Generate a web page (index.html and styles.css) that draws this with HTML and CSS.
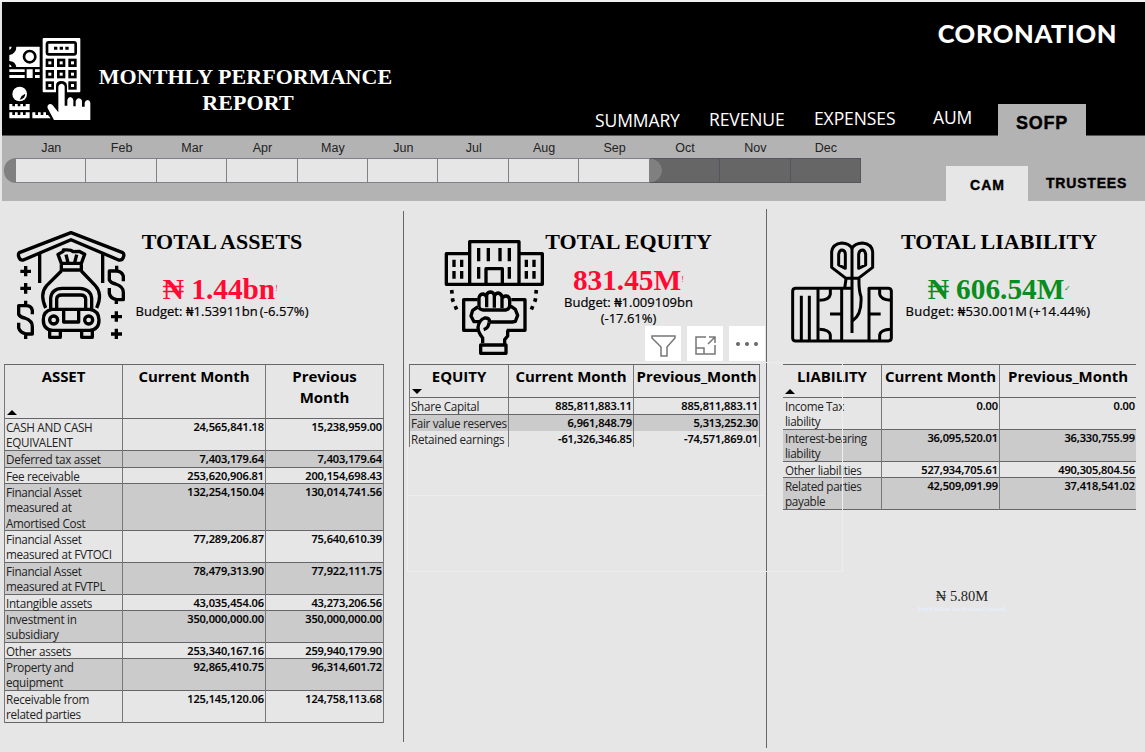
FILE: index.html
```html
<!DOCTYPE html>
<html lang="en">
<head>
<meta charset="utf-8">
<title>Monthly Performance Report</title>
<link rel="stylesheet" href="styles.css">
</head>
<body>
<div class="page">
  <header class="top">
    <svg class="logo-icon" viewBox="28 22 246 252">
      <path fill="#fff" d="M50 51H120V112H50A22 22 0 0 0 29 94V76A24 24 0 0 0 50 51ZM29 51H36A14 14 0 0 1 29 61ZM29 104A12 12 0 0 1 36 112H29ZM29 119H75V127H29ZM29 136H75V145H29ZM81 119H99V145H81ZM106 119H120V127H106ZM106 136H120V145H106Z"/>
      <circle cx="90" cy="81" r="17" fill="#fff" stroke="#000" stroke-width="8"/>
      <rect x="129" y="25" width="113" height="163" rx="3" fill="#fff"/>
      <rect x="142" y="38" width="86" height="36" rx="5" fill="#fff" stroke="#000" stroke-width="8"/>
      <path d="M163 51h10v9h-10zM180 51h10v9h-10zM197 51h10v9h-10z"/>
      <g fill="#fff" stroke="#000" stroke-width="8"><rect x="142" y="91" width="17" height="17"/><rect x="176" y="91" width="17" height="17"/><rect x="210" y="91" width="17" height="17"/><rect x="142" y="125" width="17" height="17"/><rect x="176" y="125" width="17" height="17"/><rect x="210" y="125" width="17" height="17"/><rect x="142" y="159" width="17" height="17"/><rect x="210" y="159" width="17" height="17"/></g>
      <path d="M169 190V168Q169 154 185 154T202 168V192H169Z"/>
      <circle cx="60" cy="193" r="22" fill="#fff"/><path d="M60 210Q76 207 77 192L66 199Z"/>
      <path fill="#fff" d="M29 223h9v7h8v-7h8v7h8v-7h8v7h8v-7h12v18H29ZM29 248h9v8h8v-8h8v8h8v-8h8v8h8v-8h12v18H29ZM98 248h9v8h8v-8h8v8h8v-8h8v8h6l8 10H98Z"/>
      <path fill="#fff" d="M163 271L144 236Q141 227 150 223Q157 222 161 229L176 248V171Q177 163 185 162Q194 163 195 171V228H203V210Q206 202 212 202Q220 203 221 211V230H228V214Q231 206 237 206Q246 207 247 215V231H255V219Q257 212 264 211Q271 212 272 219V271Z"/>
    </svg>
    <h1>MONTHLY PERFORMANCE<br><span>REPORT</span></h1>
    <div class="top-right">
      <div class="brand">CORONATION</div>
      <nav class="nav">
        <a class="summary">SUMMARY</a><a class="revenue">REVENUE</a><a class="expenses">EXPENSES</a><a class="aum">AUM</a><a class="active">SOFP</a>
      </nav>
    </div>
  </header>
  <section class="filters">
    <div class="timeline">
      <div class="months"><span>Jan</span><span>Feb</span><span>Mar</span><span>Apr</span><span>May</span><span>Jun</span><span>Jul</span><span>Aug</span><span>Sep</span><span>Oct</span><span>Nov</span><span>Dec</span></div>
      <div class="track"><i></i><i></i><i></i><i></i><i></i><i></i><i></i><i></i><i></i><i class="off edge"></i><i class="off"></i><i class="off"></i></div>
    </div>
    <div class="tabs"><a class="cam">CAM</a><a class="trustees">TRUSTEES</a></div>
  </section>
  <main class="columns">
    <section class="col assets">
      <div class="kpi">
        <svg class="icon" viewBox="48 30 330 330" fill="none" stroke="#000" stroke-width="10" stroke-linejoin="round">
          <path d="M213 38L58 98Q53 102 57 112Q61 122 70 120L213 59L356 120Q366 122 370 112Q374 102 368 98Z"/>
          <path d="M119 100V189M308 100V189"/>
          <path d="M184 130L174 103L190 94V90Q213 88 219 95L237 94L254 103L244 130ZM204 128L198 104M224 128L230 104"/>
          <path d="M184 133V150H244V133M184 153L140 197Q118 222 137 264M244 153L286 197Q309 222 290 264"/>
          <path d="M152 268V234Q155 206 187 205H239Q272 207 275 234V268M170 266V237Q171 225 185 225H242Q256 225 257 237V266"/>
          <path d="M170 268H156Q129 273 130 300Q130 329 158 331H269Q297 329 297 300Q297 272 269 268ZM191 268V306H236V268"/>
          <circle cx="161" cy="300" r="12"/><circle cx="266" cy="300" r="12"/>
          <path d="M149 333V352H181V333M245 333V352H277V333"/>
          <path d="M61 154H93M77 138V169M61 205H93M77 189V221M333 290H366M349 274V305M333 342H366M349 326V357"/>
          <path d="M77 242V256M97 283V271Q94 257 78 257H56V283Q61 292 74 294Q98 302 97 320V342H78Q60 337 56 324V308M77 342V357M350 137V151M370 184V168Q365 154 349 153H328V180Q333 190 347 192Q370 199 370 217V239H350Q331 235 328 220V204M349 239V252"/>
        </svg>
        <div class="kpi-text"><h2>TOTAL ASSETS</h2><div class="value red">₦ 1.44bn<span class="mark">!</span></div><div class="budget">Budget: ₦1.53911bn<span>(-6.57%)</span></div></div>
      </div>
      <div class="table">
        <div class="row head"><b>ASSET<i class="up"></i></b><b>Current Month</b><b>Previous<br>Month</b></div>
        <div class="row r2"><span>CASH AND CASH<br>EQUIVALENT</span><em>24,565,841.18</em><em>15,238,959.00</em></div>
        <div class="row r1x alt"><span>Deferred tax asset</span><em>7,403,179.64</em><em>7,403,179.64</em></div>
        <div class="row r1"><span>Fee receivable</span><em>253,620,906.81</em><em>200,154,698.43</em></div>
        <div class="row r3 alt"><span>Financial Asset<br>measured at<br>Amortised Cost</span><em>132,254,150.04</em><em>130,014,741.56</em></div>
        <div class="row r2"><span>Financial Asset<br>measured at FVTOCI</span><em>77,289,206.87</em><em>75,640,610.39</em></div>
        <div class="row r2 alt"><span>Financial Asset<br>measured at FVTPL</span><em>78,479,313.90</em><em>77,922,111.75</em></div>
        <div class="row r1"><span>Intangible assets</span><em>43,035,454.06</em><em>43,273,206.56</em></div>
        <div class="row r2 alt"><span>Investment in<br>subsidiary</span><em>350,000,000.00</em><em>350,000,000.00</em></div>
        <div class="row r1"><span>Other assets</span><em>253,340,167.16</em><em>259,940,179.90</em></div>
        <div class="row r2 alt"><span>Property and<br>equipment</span><em>92,865,410.75</em><em>96,314,601.72</em></div>
        <div class="row r2 last"><span>Receivable from<br>related parties</span><em>125,145,120.06</em><em>124,758,113.68</em></div>
      </div>
    </section>
    <section class="col equity">
      <div class="kpi">
        <svg class="icon" viewBox="132 102 300 348" fill="none" stroke="#000" stroke-width="10" stroke-linejoin="round">
          <path d="M209 238V110H357V238M209 146H139V238H427V146H357M258 238V191H307V238"/>
          <path d="M236 129V169M265 129V169M300 129V169M328 129V169M236 186V221M328 186V221M162 164V186M185 164V186M162 198V221M185 198V221M379 164V186M402 164V186M379 198V221M402 198V221"/>
          <path stroke-width="11" stroke-dasharray="11 14" d="M155 255L158 285L171 316M409 255L406 285L393 316"/>
          <path d="M233 284H191V376H235M334 284H375V376H320"/>
          <path d="M237 307V278Q240 267 249 267Q258 268 260 278V307M260 307V270Q263 261 272 261Q281 262 283 271V307M283 308V273Q287 264 295 264Q304 266 306 276V307M306 309V280Q311 272 319 273Q328 274 329 285V302Q329 311 318 315H250Q240 314 237 307M233 306L218 316L213 333L222 350L237 350M329 301L346 313L353 331L346 349L337 351H269M268 351V345Q265 338 254 339Q237 345 234 367Q234 382 248 399V414M267 352Q267 369 251 374M323 376V393L314 404V418M242 420H318V445H242Z"/>
        </svg>
        <div class="kpi-text"><h2>TOTAL EQUITY</h2><div class="value red">831.45M<span class="mark">!</span></div><div class="budget">Budget: ₦1.009109bn<br>(-17.61%)</div></div>
      </div>
      <div class="tools">
        <button aria-label="Filters"><svg viewBox="0 0 36 35"><path d="M7 10H30V12L22 21V30H16V21L7 12Z"/></svg></button>
        <button aria-label="Focus mode"><svg viewBox="0 0 36 35"><path d="M19 11H9V28H28V19M9 22H17V28M21 18L28 11M22 11H28V17"/></svg></button>
        <button aria-label="More options"><svg viewBox="0 0 36 35"><g fill="#666" stroke="none"><circle cx="9" cy="18" r="2"/><circle cx="18" cy="18" r="2"/><circle cx="27" cy="18" r="2"/></g></svg></button>
      </div>
      <div class="table">
        <div class="row head"><b>EQUITY<i class="down"></i></b><b>Current Month</b><b>Previous_Month</b></div>
        <div class="row r1x"><span>Share Capital</span><em>885,811,883.11</em><em>885,811,883.11</em></div>
        <div class="row r1 alt"><span>Fair value reserves</span><em>6,961,848.79</em><em>5,313,252.30</em></div>
        <div class="row r1 last"><span>Retained earnings</span><em>-61,326,346.85</em><em>-74,571,869.01</em></div>
      </div>
    </section>
    <section class="col liability">
      <div class="kpi">
        <svg class="icon" viewBox="60 105 312 312" fill="none" stroke="#000" stroke-width="9" stroke-linejoin="round">
          <path d="M246 250H76Q68 251 68 259V400Q69 408 77 408H355Q364 407 364 399V258Q363 250 354 250H297V406M94 272V404M118 272V404M144 251V406M215 250V406M180 327H215M297 327H332"/>
          <path d="M181 251V268Q178 286 148 286M148 373Q178 374 181 390V406M329 251V268Q332 284 362 286M362 373Q332 374 329 390V406"/>
          <path fill="#e6e6e6" d="M246 220H228L185 187V140Q188 117 215 114Q238 115 246 130Q254 115 278 114Q305 117 308 140V187L265 220ZM206 180V148Q208 135 216 135Q226 136 226 148V190ZM287 180V148Q285 135 277 135Q267 136 266 148V190Z"/>
          <path d="M246 130V384M228 222L224 250M267 222Q266 255 273 275Q276 330 248 347"/>
        </svg>
        <div class="kpi-text"><h2>TOTAL LIABILITY</h2><div class="value green">₦ 606.54M<span class="mark">✓</span></div><div class="budget">Budget: ₦530.001M<span>(+14.44%)</span></div></div>
      </div>
      <div class="table">
        <div class="row head"><b>LIABILITY<i class="up"></i></b><b>Current Month</b><b>Previous_Month</b></div>
        <div class="row r2"><span>Income Tax<br>liability</span><em>0.00</em><em>0.00</em></div>
        <div class="row r2 alt"><span>Interest-bearing<br>liability</span><em>36,095,520.01</em><em>36,330,755.99</em></div>
        <div class="row r1"><span>Other liabilities</span><em>527,934,705.61</em><em>490,305,804.56</em></div>
        <div class="row r2 alt"><span>Related parties<br>payable</span><em>42,509,091.99</em><em>37,418,541.02</em></div>
      </div>
      <div class="card"><div>₦ 5.80M</div><small>Profit before tax (trustees) (actual)</small></div>
    </section>
  </main>
  <div class="outline outer"></div>
  <div class="outline inner"></div>
</div>
</body>
</html>
```
FILE: styles.css
```css
* { box-sizing: border-box; }
body { margin: 0; background: #e6e6e6; color: #000; font-family: "Open Sans", "Noto Sans", sans-serif; }
h1, h2 { margin: 0; font-family: "Liberation Serif", serif; }
.page { position: relative; width: 1145px; height: 752px; overflow: hidden; border-top: 2px solid #f0f0f0; }
.top { display: flex; height: 134px; margin-left: 2px; background: #000; color: #fff; border-bottom: 1px solid #555; }
.logo-icon { width: 82px; height: 84px; margin: 35px 0 0 7px; flex: none; }
h1 { width: 300px; margin: 62px 0 0 4px; padding-left: 1px; font-size: 22px; line-height: 26px; letter-spacing: 0.06px; text-align: center; white-space: nowrap; flex: none; }
h1 span { padding-left: 5px; }
.top-right { flex: 1; display: flex; flex-direction: column; justify-content: space-between; padding-top: 16px; }
.brand { align-self: flex-end; margin-right: 28px; font: 900 25.5px/30px Lato, sans-serif; letter-spacing: 0.6px; }
.nav { display: flex; align-items: flex-end; height: 32px; margin-left: 198px; font-size: 17.5px; line-height: 20px; white-space: nowrap; }
.nav a { flex: none; letter-spacing: -0.1px; }
.summary { width: 116px; margin-bottom: 5px; padding-left: 2px; }
.revenue { width: 105px; margin-bottom: 6px; }
.expenses { width: 119px; margin-bottom: 7px; }
.aum { width: 65px; margin-bottom: 8px; }
.nav .active { width: 88px; height: 32px; margin-bottom: -1px; background: #b3b3b3; color: #000; font: 700 18px/38px "Liberation Sans", sans-serif; letter-spacing: 0.8px; text-align: center; -webkit-text-stroke: 0.4px #000; }
.filters { display: flex; justify-content: space-between; height: 65px; margin-left: 2px; background: #b3b3b3; }
.timeline { width: 860px; padding: 3px 0 0 14px; }
.months, .track { display: grid; grid-template-columns: repeat(12, 1fr); width: 845px; }
.months { height: 19px; font: 12.5px/18px "Liberation Sans", sans-serif; text-align: center; color: #222; }
.track { position: relative; height: 25px; }
.track i { background: #e6e6e6; border: solid #808087; border-width: 1px 1px 1px 0; }
.track .off { background: #666; border-color: #555560; }
.track .edge { background: radial-gradient(circle at 0 50%, #808080 11.5px, #666 12px); }
.track::before { content: ""; position: absolute; left: -12px; width: 12px; height: 25px; border-radius: 12px 0 0 12px; background: #808080; }
.tabs { display: flex; align-items: flex-end; font: 700 14px/20px "Liberation Sans", sans-serif; -webkit-text-stroke: 0.4px #000; }
.cam { width: 82px; height: 35px; padding: 9px 0 0 1px; background: #e6e6e6; text-align: center; letter-spacing: 1px; }
.trustees { width: 117px; height: 35px; padding: 7px 0 0 18px; letter-spacing: 0.8px; }
.columns { display: grid; grid-template-columns: 403px 363px 379px; height: 551px; }
.col { position: relative; }
.kpi { display: flex; height: 163px; }
.icon { flex: none; }
.kpi-text { text-align: center; white-space: nowrap; }
h2 { font-size: 22px; line-height: 26px; letter-spacing: 0.05px; }
.value { font: 700 29.3px/34px "Liberation Serif", serif; }
.red { color: #ff0a32; }
.green { color: #0a8c1e; }
.assets .value, .liability .value { padding-right: 3px; }
.mark { font-size: 8px; font-weight: 400; vertical-align: 8px; display: inline-block; width: 3px; line-height: 8px; }
.budget { font-size: 13px; line-height: 16px; -webkit-text-stroke: 0.2px #000; }
.budget span { margin-left: 2px; }
.assets .icon { width: 110px; height: 110px; margin: 29px 0 0 16px; }
.assets .kpi-text { width: 192px; padding-top: 28px; }
.assets .value, .liability .value { margin-top: 17px; }
.assets .budget, .liability .budget { margin-top: -3px; letter-spacing: 0.05px; }
.liability .budget { letter-spacing: 0.25px; padding-right: 2px; }
.equity .icon { width: 100px; height: 116px; margin: 38px 0 0 41px; }
.equity .kpi-text { width: 169px; padding-top: 28px; }
.equity .value { margin-top: 8px; }
.equity .budget { margin-top: -3px; }
.liability .icon { width: 104px; height: 104px; margin: 39px 0 0 24px; }
.liability .kpi-text { width: 210px; padding-top: 28px; }
.col::after { content: ""; position: absolute; right: -1px; top: 10px; width: 1px; height: 531px; background: #66666c; }
.equity::after { top: 8px; height: 539px; }
.liability::after { display: none; }
.tools { position: absolute; right: 1px; top: 125px; display: flex; gap: 6px; }
.tools button { width: 36px; height: 35px; padding: 0; border: 0; background: #fff; }
.tools svg { display: block; fill: none; stroke: #777; stroke-width: 1.5; }
.table { border-top: 1px solid #66666a; border-left: 1px solid #77777a; }
.assets .table { width: 380px; margin-left: 4px; }
.assets .row { grid-template-columns: 118px 143px 118px; }
.equity .table { width: 351px; margin-left: 6px; }
.equity .row { grid-template-columns: 99px 125px 126px; }
.liability .table { width: 353px; margin-left: 17px; border-left: 0; }
.liability .row { grid-template-columns: 99px 118px 136px; }
.row { display: grid; border-bottom: 1px solid #66666a; }
.row > * { border-right: 1px solid #77777a; }
.liability .row > :last-child { border-right: 0; }
.row span, .row em { font-size: 11.7px; line-height: 15.5px; letter-spacing: -0.3px; padding-left: 1px; white-space: nowrap; }
.row span { color: #222; padding-top: 0.5px; }
.liability .row span { padding-left: 2px; letter-spacing: -0.35px; }
.row em { font-style: normal; font-weight: 600; font-size: 11px; line-height: 15px; letter-spacing: -0.1px; text-align: right; padding-right: 1px; -webkit-text-stroke: 0.15px #000; }
.row b { position: relative; font-size: 15px; line-height: 21px; padding-top: 1px; text-align: center; white-space: nowrap; font-weight: 700; letter-spacing: -0.05px; }
.head { height: 33px; }
.assets .head { height: 54px; }
.r1 { height: 16px; }
.r1x { height: 17px; }
.r2 { height: 32px; }
.r3 { height: 47px; }
.alt { background: #cbcbcb; }
.equity .alt, .equity .last { border-bottom: 0; }
.up, .down { position: absolute; left: 2px; bottom: 3px; border: 5px solid transparent; }
.up { border-top: 0; border-bottom-color: #000; }
.down { border-bottom: 0; border-top-color: #000; }
.card { width: 90px; margin: 76px 0 0 151px; text-align: center; font: 14.5px/20px "Liberation Serif", serif; color: #222; }
.card small { display: block; font-size: 6px; line-height: 6px; font-weight: 700; color: #e6f0ff; white-space: nowrap; }
.outline { position: absolute; border: solid #ededed; border-width: 0 1px 1px 0; }
.outer { left: 407px; top: 360px; width: 436px; height: 210px; border-width: 1px; }
.inner { left: 408px; top: 360px; width: 358px; height: 134px; border-right: 0; }
```
